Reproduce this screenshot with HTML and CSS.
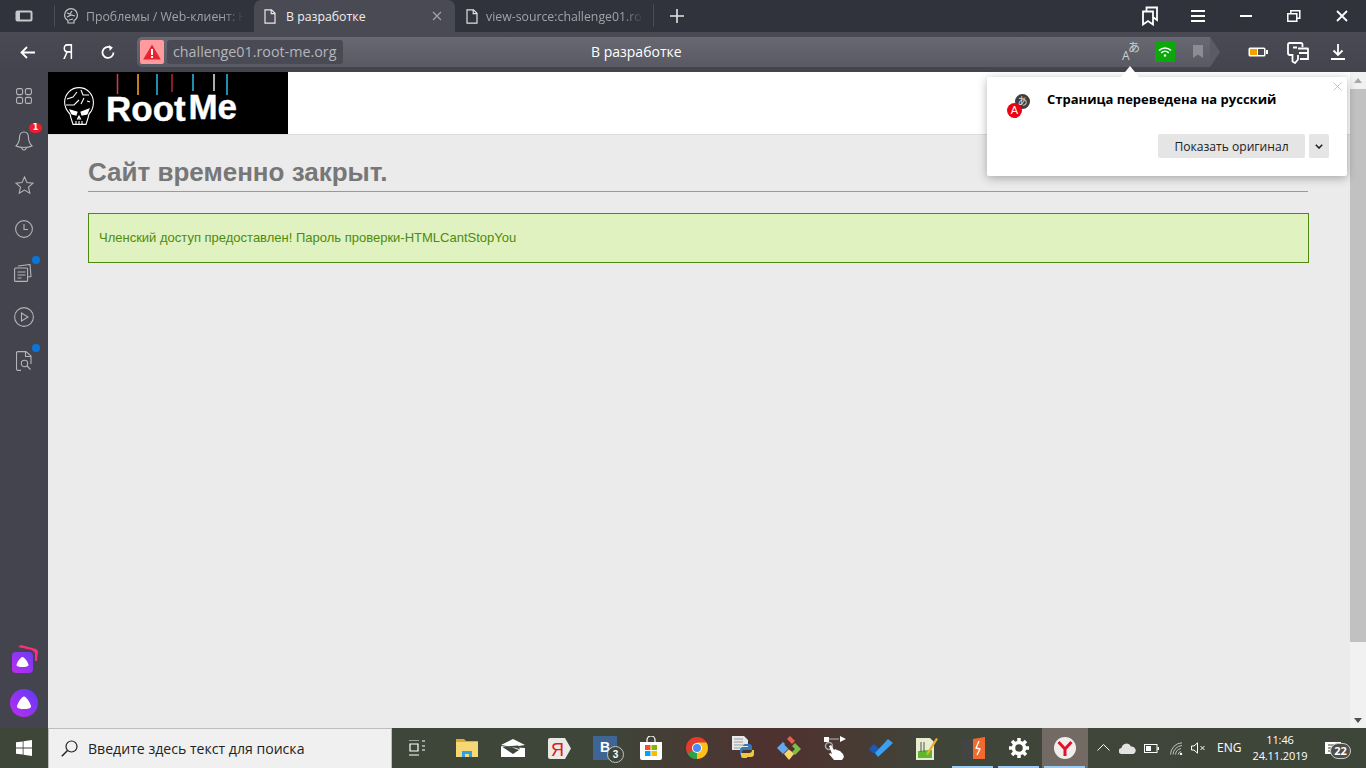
FILE: index.html
```html
<!DOCTYPE html>
<html lang="ru">
<head>
<meta charset="utf-8">
<title>В разработке</title>
<link rel="stylesheet" href="styles.css">
</head>
<body>
<div class="tabbar">
  <div class="tabs-toggle">
    <svg width="18" height="12" viewBox="0 0 18 12"><rect x=".5" y=".5" width="17" height="11" rx="2" fill="#c8c8cc"/><rect x="5" y="2.5" width="10.5" height="7" fill="#30323c"/></svg>
  </div>
  <div class="tab tab-first">
    <svg class="tab-ico" width="14" height="16" viewBox="0 0 14 16" fill="none" stroke="#c4c4c8" stroke-width="1.200"><path d="M4 15v-2.500C2 11.500.6 9.500.6 7 .6 3.500 3.500.6 7 .6s6.400 2.900 6.400 6.400c0 2.500-1.400 4.500-3.400 5.500V15z"/><path d="M3 5l3 1 2-3M3 9l4-2 4 1M5 12l4-1"/></svg>
    <span class="tab-label dim">Проблемы / Web-клиент: Н</span>
  </div>
  <div class="tab tab-active">
    <svg class="tab-ico" width="12" height="15" viewBox="0 0 12 15" fill="none" stroke="#e8e8ea" stroke-width="1.200"><path d="M1 .8h6.500L11 4.300v9.900H1zM7.200 1v3.600H11"/></svg>
    <span class="tab-label">В разработке</span>
    <svg class="tab-close" width="10" height="10" viewBox="0 0 10 10" stroke="#a5a6ad" stroke-width="1.100"><path d="M1 1l8 8M9 1l-8 8"/></svg>
  </div>
  <div class="tab tab-third">
    <svg class="tab-ico" width="12" height="15" viewBox="0 0 12 15" fill="none" stroke="#e0e0e2" stroke-width="1.200"><path d="M1 .8h6.500L11 4.300v9.900H1zM7.200 1v3.600H11"/></svg>
    <span class="tab-label dim">view-source:challenge01.ro</span>
  </div>
  <div class="tab-plus">
    <svg width="14" height="14" viewBox="0 0 14 14" stroke="#e4e4e6" stroke-width="1.600"><path d="M7 0v14M0 7h14"/></svg>
  </div>
  <div class="win-controls">
    <svg width="48" height="20" viewBox="-16 0 48 20" fill="none" stroke="#fff" stroke-width="1.800"><path d="M1 5.500h10v13L6 15l-5 3.500zM4.500 5V1.500H15v12.500l-3.500-2.500"/></svg>
    <svg width="48" height="12" viewBox="0 0 48 12" stroke="#fff" stroke-width="2"><path d="M17 1h14M17 6h14M17 11h14"/></svg>
    <svg width="48" height="12" viewBox="0 0 48 12" stroke="#fff" stroke-width="2"><path d="M18 6h12"/></svg>
    <svg width="48" height="12" viewBox="0 0 48 12" fill="none" stroke="#fff" stroke-width="1.500"><path d="M17.800 3.800h9v7.500h-9zM20.800 3.500V.8h9v7.500h-3"/></svg>
    <svg width="48" height="12" viewBox="0 0 48 12" stroke="#fff" stroke-width="1.800"><path d="M19 1l10 10M29 1L19 11"/></svg>
  </div>
</div>

<div class="toolbar">
  <div class="nav-btn nav-back">
    <svg width="15" height="13" viewBox="0 0 15 13" fill="none" stroke="#fff" stroke-width="1.800"><path d="M15 6.500H2M7 1L1.500 6.500 7 12"/></svg>
  </div>
  <div class="nav-btn nav-ya"><span class="ya-glyph">Я</span></div>
  <div class="nav-btn nav-reload">
    <svg width="14" height="14" viewBox="0 0 14 14" fill="none" stroke="#fff" stroke-width="1.800"><path d="M12.500 7.500a5.500 5.500 0 1 1-3-5"/><path d="M7.800 0l4 2.500-3 3.500" fill="#fff" stroke="none"/></svg>
  </div>
  <div class="omnibox">
    <div class="warn">
      <svg width="18" height="16" viewBox="0 0 18 16"><path d="M9 .5L17.800 15.500H.2z" fill="#e8252f"/><rect x="8" y="5" width="2" height="6" fill="#fff"/><rect x="8" y="12" width="2" height="2" fill="#fff"/></svg>
    </div>
    <div class="host">challenge01.root-me.org</div>
    <div class="page-title">В разработке</div>
    <svg class="omni-translate" width="20" height="22" viewBox="0 0 20 22"><text x="1" y="19" class="tr-a">A</text><text x="7" y="11" class="tr-k">あ</text></svg>
    <div class="wifi">
      <svg width="14" height="10" viewBox="0 0 14 10" fill="none" stroke="#fff" stroke-width="1.600"><path d="M1 3.500a8.500 8.500 0 0 1 12 0M3.200 5.800a5.500 5.500 0 0 1 7.600 0"/><circle cx="7" cy="8.500" r="1.200" fill="#fff" stroke="none"/></svg>
    </div>
    <svg class="omni-mark" width="10" height="13" viewBox="0 0 10 13"><path d="M0 0h10v13L5 9.500 0 13z" fill="#8c8d94"/></svg>
    <svg class="omni-tip" width="10" height="30" viewBox="0 0 10 30"><path d="M0 0l10 15L0 30z" fill="#5a5b65"/></svg>
  </div>
  <div class="tool-icons">
    <svg class="ti-batt" width="20" height="10" viewBox="0 0 20 10"><rect x=".5" y=".5" width="17" height="9" rx="1.500" fill="#fff"/><rect x="2" y="2" width="7" height="6" fill="#f5a000"/><rect x="10" y="2" width="6" height="6" fill="#4b4c56"/><rect x="18" y="3" width="2" height="4" fill="#fff"/></svg>
    <svg class="ti-wallet" width="22" height="22" viewBox="0 0 22 22" fill="none" stroke="#fff" stroke-width="1.800"><path d="M15.500 5V2.500A1.500 1.500 0 0 0 14 1H2.500A1.500 1.500 0 0 0 1 2.500V11a2 2 0 0 0 2 2h2.500v6.500L8 21l3-3.500V13"/><path d="M11 6.500h9.500a.5.500 0 0 1 .5.500v10H13M12 11h9M6 5.500h4"/></svg>
    <svg class="ti-down" width="14" height="16" viewBox="0 0 14 16" fill="none" stroke="#fff" stroke-width="1.800"><path d="M7 0v11M2.500 6.500L7 11l4.500-4.500M0 15h14"/></svg>
  </div>
</div>

<div class="middle">
  <aside class="sidebar">
    <div class="side-item side-first">
      <svg width="16" height="16" viewBox="0 0 16 16" fill="none" stroke="#b4b5ba" stroke-width="1.100"><rect x=".6" y=".6" width="6" height="6" rx="1.500"/><rect x="9.400" y=".6" width="6" height="6" rx="1.500"/><rect x=".6" y="9.400" width="6" height="6" rx="1.500"/><rect x="9.400" y="9.400" width="6" height="6" rx="1.500"/></svg>
    </div>
    <div class="side-item">
      <svg width="18" height="20" viewBox="0 0 18 20" fill="none" stroke="#b4b5ba" stroke-width="1.100"><path d="M9 1c3 0 4.500 2.500 4.500 5.500 0 4 1 6 3.500 8.500-2 1-4.500 1.500-8 1.500S3 16 1 15c2.500-2.500 3.500-4.500 3.500-8.500C4.500 3.500 6 1 9 1zM6.500 16.500c.3 1.600 1.200 2.500 2.500 2.500s2.200-.9 2.500-2.500"/></svg>
      <span class="badge-num">1</span>
    </div>
    <div class="side-item">
      <svg width="19" height="18" viewBox="0 0 19 18" fill="none" stroke="#b4b5ba" stroke-width="1.100"><path d="M9.500 1l2.500 5.600 6 .6-4.500 4 1.300 6-5.300-3.100-5.300 3.100 1.300-6L1 7.200l6-.6z"/></svg>
    </div>
    <div class="side-item">
      <svg width="18" height="18" viewBox="0 0 18 18" fill="none" stroke="#b4b5ba" stroke-width="1.100"><circle cx="9" cy="9" r="8.400"/><path d="M9 4v5.500h4"/></svg>
    </div>
    <div class="side-item">
      <svg width="20" height="18" viewBox="0 0 20 18" fill="none" stroke="#b4b5ba" stroke-width="1.100"><rect x=".6" y="4" width="13" height="13.400" rx="1"/><path d="M4 2l12-1.500 1 12-3 .5M3.500 8h8M3.500 11h8M3.500 14h4"/></svg>
      <span class="badge-dot"></span>
    </div>
    <div class="side-item">
      <svg width="20" height="20" viewBox="0 0 20 20" fill="none" stroke="#b4b5ba" stroke-width="1.100"><circle cx="10" cy="10" r="9.400"/><path d="M7.500 6v8l6.500-4z"/></svg>
    </div>
    <div class="side-item">
      <svg width="16" height="20" viewBox="0 0 16 20" fill="none" stroke="#b4b5ba" stroke-width="1.100"><path d="M5 19.400H2a1.500 1.500 0 0 1-1.500-1.500V1.800A1.500 1.500 0 0 1 2 .6h8l5 4.500V13M9.500 1v4.500H15"/><circle cx="8.500" cy="12.500" r="3.200"/><path d="M11 15l3.500 3.500"/></svg>
      <span class="badge-dot"></span>
    </div>
    <div class="side-spacer"></div>
    <div class="side-item side-alice-card">
      <svg width="28" height="32" viewBox="0 0 28 32"><path d="M8 2l3-2 15 4 2 2-1 10h-2V8l-3-3z" fill="#ff2d7f"/><rect x="2" y="7" width="21" height="21" rx="4" fill="url(#ga)"/><path d="M12.500 12c2 0 6 6 6 8 0 1.500-3 2-6 2s-6-.5-6-2c0-2 4-8 6-8z" fill="#fff"/><defs><linearGradient id="ga" x1="0" y1="1" x2="1" y2="0"><stop offset="0" stop-color="#c02cf0"/><stop offset="1" stop-color="#6a3cf5"/></linearGradient></defs></svg>
    </div>
    <div class="side-item side-alice">
      <svg width="28" height="28" viewBox="0 0 28 28"><circle cx="14" cy="14" r="14" fill="url(#gb)"/><path d="M14 7.500c2.300 0 7 7.500 7 10 0 2-3.500 2.500-7 2.500s-7-.5-7-2.500c0-2.500 4.700-10 7-10z" fill="#fff"/><defs><linearGradient id="gb" x1="0" y1="1" x2="1" y2="0"><stop offset="0" stop-color="#c02cf0"/><stop offset="1" stop-color="#5a3cf5"/></linearGradient></defs></svg>
    </div>
  </aside>

  <main class="page">
    <header class="site-header">
      <div class="logo">
        <svg class="logo-skull" width="30" height="38" viewBox="0 0 30 38" fill="none" stroke="#fff" stroke-width="1.100"><path d="M6 27C2 23 .6 19 .6 15 .8 7 7 .6 15 .6S29.200 7 29.400 15c.1 5-1.400 9-4.400 12l-1 4-2 6.400H9L7 31z"/><path d="M3 12l6-2 4-5M2 18h8l5-5M17 3l2 5h6M20 11l-3 6M23 14l3 1"/><path d="M6 23l7 2-1 3-4-1zM25 22l-8 3 1 3 5-1z" fill="#fff"/><path d="M15 29l-1.500 3h3zM12 37v-3M15 37v-3M18 37v-3"/></svg>
        <svg class="logo-strings" width="190" height="26" viewBox="0 0 190 26" stroke-width="1.600"><path d="M69.500 1v20" stroke="#c93a48"/><path d="M90 1v21" stroke="#f0a020"/><path d="M109 1v21" stroke="#2ab0d8"/><path d="M124 1v18" stroke="#b02030"/><path d="M145 1v17" stroke="#2ab0d8"/><path d="M166 1v17" stroke="#d8d8d8"/><path d="M179 1v21" stroke="#2ab0d8"/></svg>
        <p class="logo-word">Root <span class="logo-me">Me</span></p>
      </div>
    </header>
    <div class="content">
      <h1 class="headline">Сайт временно закрыт.</h1>
      <div class="alert">Членский доступ предоставлен! Пароль проверки-HTMLCantStopYou</div>
    </div>
  </main>

  <div class="scrollbar">
    <span class="arrow-up"></span>
    <div class="thumb"></div>
    <span class="arrow-down"></span>
  </div>

  <div class="popup">
    <span class="popup-tip"></span>
    <svg class="popup-x" width="9" height="9" viewBox="0 0 9 9" stroke="#c4c4c4" stroke-width="1"><path d="M.5.500l8 8M8.500.500l-8 8"/></svg>
    <div class="popup-head">
      <div class="popup-ico">
        <span class="ico-dark">あ</span>
        <span class="ico-red">A</span>
      </div>
      <div class="popup-title">Страница переведена на русский</div>
    </div>
    <div class="popup-actions">
      <div class="popup-btn">Показать оригинал</div>
      <div class="popup-more">
        <svg width="8" height="5" viewBox="0 0 8 5" fill="none" stroke="#222" stroke-width="1.600"><path d="M.8.800L4 4l3.200-3.200"/></svg>
      </div>
    </div>
  </div>
</div>

<footer class="taskbar">
  <div class="start">
    <svg width="16" height="16" viewBox="0 0 16 16" fill="#fff"><path d="M0 2.300l6.700-.9v6.200H0zM7.500 1.300L16 0v7.600H7.500zM0 8.400h6.700v6.200L0 13.700zM7.500 8.400H16V16l-8.500-1.300z"/></svg>
  </div>
  <div class="search">
    <svg width="17" height="17" viewBox="0 0 17 17" fill="none" stroke="#222" stroke-width="1.200"><circle cx="10.500" cy="6.500" r="5.500"/><path d="M6.500 10.500L.8 16.200" stroke-width="1.500"/></svg>
    <span>Введите здесь текст для поиска</span>
  </div>
  <div class="task-apps">
    <div class="app app-view"><svg width="18" height="16" viewBox="0 0 18 16" fill="none" stroke="#fff" stroke-width="1.200"><path d="M1 0h10M2 4h8v7H2zM1 15h10M14 1h3M14 6h3M14 10h3"/></svg></div>
    <div class="app"><svg width="22" height="20" viewBox="0 0 22 20"><path d="M0 1h8l2 2h12v2H0z" fill="#e4a92c"/><rect y="4" width="22" height="15" fill="#f7d674"/><path d="M6 19v-6h10v6h-3v-3H9v3z" fill="#2f9fe8"/></svg></div>
    <div class="app"><svg width="24" height="18" viewBox="0 0 24 18"><path d="M0 6L12 0l12 6-12 2z" fill="#fff"/><path d="M0 7.500L24 9v9H0zM0 7l12 8 6-4-8-3z" fill="#fff"/><path d="M5 7.500l12-1 2 4-5-2z" fill="#3f4639"/></svg></div>
    <div class="app"><svg width="23" height="21" viewBox="0 0 23 21"><path d="M0 2a2 2 0 0 1 2-2h15l6 10.500L17 21H2a2 2 0 0 1-2-2z" fill="#e9e9e6"/><text x="3" y="18" class="ya-red">Я</text></svg></div>
    <div class="app app-vk"><span class="vk">В</span><span class="vk-count">3</span></div>
    <div class="app"><svg width="24" height="24" viewBox="0 0 24 24"><path d="M8 6V4a4 4 0 0 1 8 0v2" fill="none" stroke="#fff" stroke-width="1.200"/><path d="M1 6h22v16a2 2 0 0 1-2 2H3a2 2 0 0 1-2-2z" fill="#fff"/><rect x="6" y="9" width="5.500" height="5" fill="#f25022"/><rect x="12.500" y="9" width="5.500" height="5" fill="#7fba00"/><rect x="6" y="15" width="5.500" height="5" fill="#00a4ef"/><rect x="12.500" y="15" width="5.500" height="5" fill="#ffb900"/></svg></div>
    <div class="app"><svg width="22" height="22" viewBox="0 0 22 22"><circle cx="11" cy="11" r="11" fill="#e33b2e"/><path d="M11 11L1.500 16.500A11 11 0 0 0 12 22z" fill="#2ba24c"/><path d="M11 11l0 11a11 11 0 0 0 9.500-16.500H11z" fill="#fbc116"/><circle cx="11" cy="11" r="5" fill="#fff"/><circle cx="11" cy="11" r="4" fill="#4b8bf5"/></svg></div>
    <div class="app"><svg width="24" height="24" viewBox="0 0 24 24"><path d="M1 0h12l4 4v10H1z" fill="#e8e8e8"/><path d="M3 3h9M3 6h9M3 9h9M3 12h6" stroke="#999"/><path d="M14 8h4a3 3 0 0 1 3 3v3h-8a2 2 0 0 0-2 2v3H9v-5a3 3 0 0 1 3-3h5v-1h-5a2 2 0 0 1 2-2z" fill="#3a78b5"/><path d="M12 22a2 2 0 0 1-2-2v-3h8a3 3 0 0 0 3-3h2v4a3 3 0 0 1-3 3h-4v1z" fill="#f0c93a"/></svg></div>
    <div class="app"><svg width="24" height="24" viewBox="0 0 24 24"><path d="M0 12l6-6 6 6-6 6z" fill="#64a8f0"/><path d="M10 3l3-3 5 5-3 3z" fill="#e8604c"/><path d="M15 10l3-3 6 6-6 6-3-3 3-3z" fill="#7cc04a"/><path d="M7 18l5-5 5 5-5 6z" fill="#f5d76e"/><path d="M8 8l6 6" stroke="#4a3430" stroke-width="2"/></svg></div>
    <div class="app"><svg width="24" height="24" viewBox="0 0 24 24" fill="#fff"><rect x="1" y="1" width="5" height="5"/><path d="M6 3h10" stroke="#bbb" stroke-width="1"/><path d="M17 0l6 3-6 3z"/><circle cx="6" cy="10" r="3.500" fill="none" stroke="#aaa" stroke-width="1.500"/><path d="M6 10l2-1 3 5 1-1 2 1 3 1 3 3 1 3-2 3h-8l-5-6 1-1 2 1z"/></svg></div>
    <div class="app"><svg width="24" height="18" viewBox="0 0 24 18"><path d="M0 10l5-5 5 5-3 4h-3z" fill="#185abd"/><path d="M6 14L19 0l5 4L9 18z" fill="#3aa0f0"/></svg></div>
    <div class="app"><svg width="22" height="24" viewBox="0 0 22 24"><path d="M0 2h14l4 4v18H0z" fill="#e8ecd0"/><path d="M2 15c4 0 6-1 14-1v8H2z" fill="#5cb82c"/><path d="M5 6v10M8 6v10" stroke="#555" stroke-width="1"/><path d="M10 18L20 2l2 1-10 16z" fill="#e8b030"/></svg></div>
    <div class="app app-open"><svg width="24" height="22" viewBox="0 0 24 22"><rect y="2" width="12" height="20" fill="#444"/><path d="M12 2l12-2v22H12z" fill="#f26a2e"/><path d="M18 4l-3 7 4 1-3 6" fill="none" stroke="#fff" stroke-width="1.300"/></svg></div>
    <div class="app app-open"><svg width="20" height="20" viewBox="0 0 20 20"><circle cx="10" cy="10" r="5.500" fill="none" stroke="#fff" stroke-width="3.500"/><path d="M10 0v4M10 16v4M0 10h4M16 10h4M3 3l3 3M14 14l3 3M17 3l-3 3M6 14l-3 3" stroke="#fff" stroke-width="3.500"/></svg></div>
    <div class="app app-open app-current"><svg width="22" height="22" viewBox="0 0 22 22"><circle cx="11" cy="11" r="11" fill="#f1eded"/><path d="M4.500 5l6.500 7v7M17.500 5L11 12" fill="none" stroke="#e3122a" stroke-width="3"/></svg></div>
  </div>
  <div class="tray">
    <svg class="tr-chev" width="13" height="7" viewBox="0 0 13 7" fill="none" stroke="#fff" stroke-width="1"><path d="M.5 6.500l6-6 6 6"/></svg>
    <svg class="tr-cloud" width="17" height="11" viewBox="0 0 17 11"><path d="M3 11a3 3 0 0 1-.5-6A5 5 0 0 1 12 3.500a4 4 0 0 1 2.500 7.500z" fill="#e3e3e3"/></svg>
    <svg class="tr-batt" width="15" height="9" viewBox="0 0 15 9"><rect x=".5" y=".5" width="12.500" height="8" fill="none" stroke="#fff"/><rect x="2" y="2" width="5" height="5" fill="#fff"/><rect x="13.500" y="3" width="1.500" height="3" fill="#fff"/></svg>
    <svg class="tr-wifi" width="13" height="13" viewBox="0 0 13 13" fill="none" stroke="#cfcfcf" stroke-width=".9"><path d="M.5 12.500A12 12 0 0 1 12 .8M3 12.500A9.500 9.500 0 0 1 12 3.500M5.500 12.500A7 7 0 0 1 11 6.500M8 12.500a4 4 0 0 1 3-3"/><circle cx="11" cy="12" r="1.200" fill="#fff" stroke="none"/></svg>
    <svg class="tr-vol" width="15" height="12" viewBox="0 0 15 12" fill="none" stroke="#fff" stroke-width="1"><path d="M.5 4h2.500L6.500.8v10.400L3 8H.5zM9.500 4l4 4M13.500 4l-4 4"/></svg>
    <span class="tr-lang">ENG</span>
    <div class="clock"><span>11:46</span><span>24.11.2019</span></div>
    <div class="notify">
      <svg width="16" height="14" viewBox="0 0 16 14"><path d="M0 0h16v12H0z" fill="#fff"/><path d="M3 3h10M3 6h10M3 9h7" stroke="#3e4639"/></svg>
      <span class="notify-count">22</span>
    </div>
  </div>
</footer>
</body>
</html>
```
FILE: styles.css
```css
* { box-sizing: border-box; }
html, body { margin: 0; height: 100%; overflow: hidden; }
body { display: flex; flex-direction: column; width: 1366px; height: 768px; font-family: "Open Sans", "Noto Sans", sans-serif; background: #ebebeb; }

.tabbar { height: 32px; flex: none; display: flex; align-items: stretch; background: #30323c; }
.tabs-toggle { width: 48px; flex: none; display: flex; align-items: center; justify-content: center; }
.tab { display: flex; align-items: center; flex: none; position: relative; font-size: 12.300px; white-space: nowrap; overflow: hidden; }
.tab-ico { flex: none; }
.tab-first { width: 206px; padding-left: 16px; gap: 8px; }
.tab-first::before { content: ""; position: absolute; left: 6px; top: 5px; width: 1px; height: 22px; background: #494b55; }
.tab-active { width: 201px; padding-left: 10px; gap: 10px; background: #494a54; border-radius: 7px 7px 0 0; color: #fff; }
.tab-third { width: 199px; padding-left: 11px; gap: 8px; }
.tab-third::after { content: ""; position: absolute; right: 0; top: 4px; width: 1px; height: 23px; background: #494b55; }
.tab-label { color: #eee; }
.tab-label.dim { color: #a2a3a9; -webkit-mask-image: linear-gradient(90deg, #000 0, #000 136px, transparent 158px); mask-image: linear-gradient(90deg, #000 0, #000 136px, transparent 158px); width: 168px; }
.tab-close { margin-left: auto; margin-right: 13px; }
.tab-plus { width: 46px; flex: none; display: flex; align-items: center; justify-content: center; }
.win-controls { margin-left: auto; display: flex; align-items: center; }

.toolbar { height: 40px; flex: none; display: flex; align-items: center; background: linear-gradient(#494a54, #43444e); }
.nav-btn { width: 40px; flex: none; display: flex; align-items: center; justify-content: center; color: #fff; }
.nav-back { margin-left: 8px; padding-right: 2px; }
.nav-ya { font-size: 22px; font-family: "Liberation Sans", sans-serif; line-height: 1; }
.ya-glyph { display: block; transform: scaleX(.68); }
.omnibox { margin-left: 9px; width: 1073px; height: 30px; flex: none; position: relative; display: flex; align-items: center; padding-left: 3px; background: linear-gradient(#676871, #585963); border-radius: 5px 0 0 5px; }
.warn { width: 24px; height: 24px; flex: none; display: flex; align-items: center; justify-content: center; background: #ff9a9e; border-radius: 2px; }
.host { margin-left: 3px; height: 24px; width: 176px; flex: none; padding-left: 6px; font-size: 14.300px; line-height: 23px; color: #b5b6bb; background: #494a54; border-radius: 3px; white-space: nowrap; }
.page-title { position: absolute; left: 454px; top: 5px; font-size: 14px; line-height: 20px; color: #fff; }
.omni-translate { position: absolute; left: 984px; top: 4px; overflow: visible; }
.tr-a { font: 12px "Open Sans", sans-serif; fill: #cfcfd2; }
.tr-k { font: 12px "Noto Sans CJK JP", sans-serif; fill: #cfcfd2; }
.wifi { position: absolute; left: 1018px; top: 5px; width: 20px; height: 20px; background: #0aa80a; display: flex; align-items: center; justify-content: center; }
.omni-mark { position: absolute; left: 1056px; top: 8px; }
.omni-tip { position: absolute; left: 1073px; top: 0; }
.tool-icons { flex: none; position: relative; width: 146px; height: 40px; }
.ti-batt { position: absolute; left: 38px; top: 15px; }
.ti-wallet { position: absolute; left: 77px; top: 10px; }
.ti-down { position: absolute; left: 121px; top: 12px; }

.middle { flex: 1; min-height: 0; display: flex; position: relative; }
.sidebar { width: 48px; flex: none; background: #43444e; display: flex; flex-direction: column; align-items: center; padding: 2px 0 4px; }
.side-item { height: 44px; flex: none; width: 48px; display: flex; align-items: center; justify-content: center; position: relative; }
.side-first { margin-bottom: 1px; }
.side-spacer { flex: 1; }
.side-alice-card { height: 42px; }
.side-alice { height: 42px; }
.badge-num { position: absolute; left: 29px; top: 4px; width: 13px; height: 10px; border-radius: 5px; background: #ed1c2e; color: #fff; font: bold 8px/10px "DejaVu Sans", sans-serif; text-align: center; }
.badge-dot { position: absolute; left: 32px; top: 5px; width: 8px; height: 8px; border-radius: 50%; background: #0a75d8; }

.page { flex: 1; min-width: 0; background: #ebebeb; }
.site-header { height: 63px; background: #fff; border-bottom: 1px solid #ddd; }
.logo { width: 240px; height: 62px; background: #000; position: relative; overflow: hidden; }
.logo-skull { position: absolute; left: 16px; top: 15px; }
.logo-strings { position: absolute; left: 0; top: 1px; }
.logo-word { margin: 0; padding: 15px 0 0 58px; color: #fff; font: bold 35px/40px "Liberation Sans", sans-serif; -webkit-text-stroke: .4px #fff; word-spacing: -7px; white-space: nowrap; }
.logo-me { vertical-align: 2px; }

.content { padding: 21px 42px 0 40px; font-family: "Liberation Sans", sans-serif; }
.headline { margin: 0; height: 36px; font-size: 26px; line-height: 33px; font-weight: bold; color: #777; border-bottom: 1px solid #999; }
.alert { margin-top: 21px; height: 50px; margin-right: -1px; padding-left: 10px; background: #dff2bf; border: 1px solid #4f8a10; color: #4f8a10; font-size: 13px; line-height: 48px; }

.scrollbar { width: 16px; flex: none; background: #f1f1f1; display: flex; flex-direction: column; align-items: center; }
.arrow-up { margin-top: 6px; border: 4px solid transparent; border-top: 0; border-bottom: 5px solid #a8a8a8; height: 0; width: 8px; }
.thumb { margin-top: 6px; width: 16px; height: 553px; background: #c1c1c1; }
.arrow-down { margin-top: auto; margin-bottom: 5px; border: 4px solid transparent; border-bottom: 0; border-top: 5px solid #505050; height: 0; width: 8px; }

.popup { position: absolute; left: 987px; top: 5px; width: 360px; height: 99px; background: #fff; border-radius: 2px; box-shadow: 0 2px 10px rgba(0, 0, 0, .3); }
.popup-tip { position: absolute; left: 134px; top: -11px; border-left: 9px solid transparent; border-right: 9px solid transparent; border-bottom: 11px solid #fff; }
.popup-x { position: absolute; left: 346px; top: 5px; }
.popup-head { display: flex; padding: 13px 0 0 20px; height: 57px; }
.popup-ico { width: 40px; flex: none; position: relative; }
.ico-dark { position: absolute; left: 8px; top: 4px; width: 15px; height: 15px; border-radius: 50%; background: #3e3e3e; color: #ddd; font: 10px/14px "Noto Sans CJK JP", sans-serif; text-align: center; }
.ico-red { position: absolute; left: 0; top: 13px; width: 15px; height: 15px; border-radius: 50%; background: #f00012; color: #fff; font: 11px/15px "Liberation Sans", sans-serif; text-align: center; }
.popup-title { font-size: 13px; font-weight: bold; color: #000; line-height: 18px; white-space: nowrap; }
.popup-actions { display: flex; justify-content: flex-end; gap: 4px; padding-right: 18px; }
.popup-btn { width: 147px; height: 24px; background: #e5e5e5; border-radius: 2px; font-size: 12.100px; line-height: 25px; color: #222; text-align: center; }
.popup-more { width: 20px; height: 24px; background: #e5e5e5; border-radius: 2px; display: flex; align-items: center; justify-content: center; }

.taskbar { height: 40px; flex: none; display: flex; align-items: stretch; background: linear-gradient(90deg, #3e4639 0, #3e4639 44%, #4e3230 56%, #4e3230 58%, #414539 68%, #3e4639 100%); }
.start { width: 48px; flex: none; display: flex; align-items: center; justify-content: center; }
.search { width: 344px; flex: none; display: flex; align-items: center; gap: 10px; padding-left: 12px; background: #f0f0f0; border: 1px solid #bdbdbd; border-bottom: 0; font-size: 14.100px; color: #222; white-space: nowrap; }
.task-apps { display: flex; margin-left: 2px; flex: none; }
.app { width: 46px; height: 40px; flex: none; display: flex; align-items: center; justify-content: center; position: relative; }
.app-view { margin-right: 4px; }
.app-vk { justify-content: flex-start; padding-left: 11px; }
.vk { width: 24px; height: 24px; background: #3f6594; color: #fff; font: bold 14px/22px "Liberation Sans", sans-serif; text-align: center; }
.vk-count { position: absolute; left: 25px; top: 18px; width: 17px; height: 17px; border-radius: 50%; background: #3e4639; border: 1px solid #c4c4c4; color: #fff; font: bold 10px/15px "Liberation Sans", sans-serif; text-align: center; }
.app-open::after { content: ""; position: absolute; left: 2px; right: 3px; bottom: 0; height: 2px; background: #9bcbf5; }
.app-current { background: #736a64; }
.ya-red { font: 18px "Liberation Sans", sans-serif; fill: #e01a20; }
.tray { flex: 1; position: relative; color: #fff; }
.tr-chev { position: absolute; left: 9px; top: 16px; }
.tr-cloud { position: absolute; left: 31px; top: 15px; }
.tr-batt { position: absolute; left: 56px; top: 16px; }
.tr-wifi { position: absolute; left: 82px; top: 14px; }
.tr-vol { position: absolute; left: 103px; top: 14px; }
.tr-lang { position: absolute; left: 129px; top: 12px; font-size: 12px; line-height: 16px; }
.clock { position: absolute; left: 155px; top: 4px; width: 74px; display: flex; flex-direction: column; align-items: center; font-size: 11px; line-height: 16px; letter-spacing: -.1px; }
.notify { position: absolute; left: 237px; top: 11px; width: 26px; height: 24px; }
.notify-count { position: absolute; left: 5px; top: 4px; width: 21px; height: 16px; border-radius: 8px; background: #4e4f49; border: 1px solid #ccc; color: #fff; font: bold 11px/14px "Open Sans", sans-serif; text-align: center; }
```
